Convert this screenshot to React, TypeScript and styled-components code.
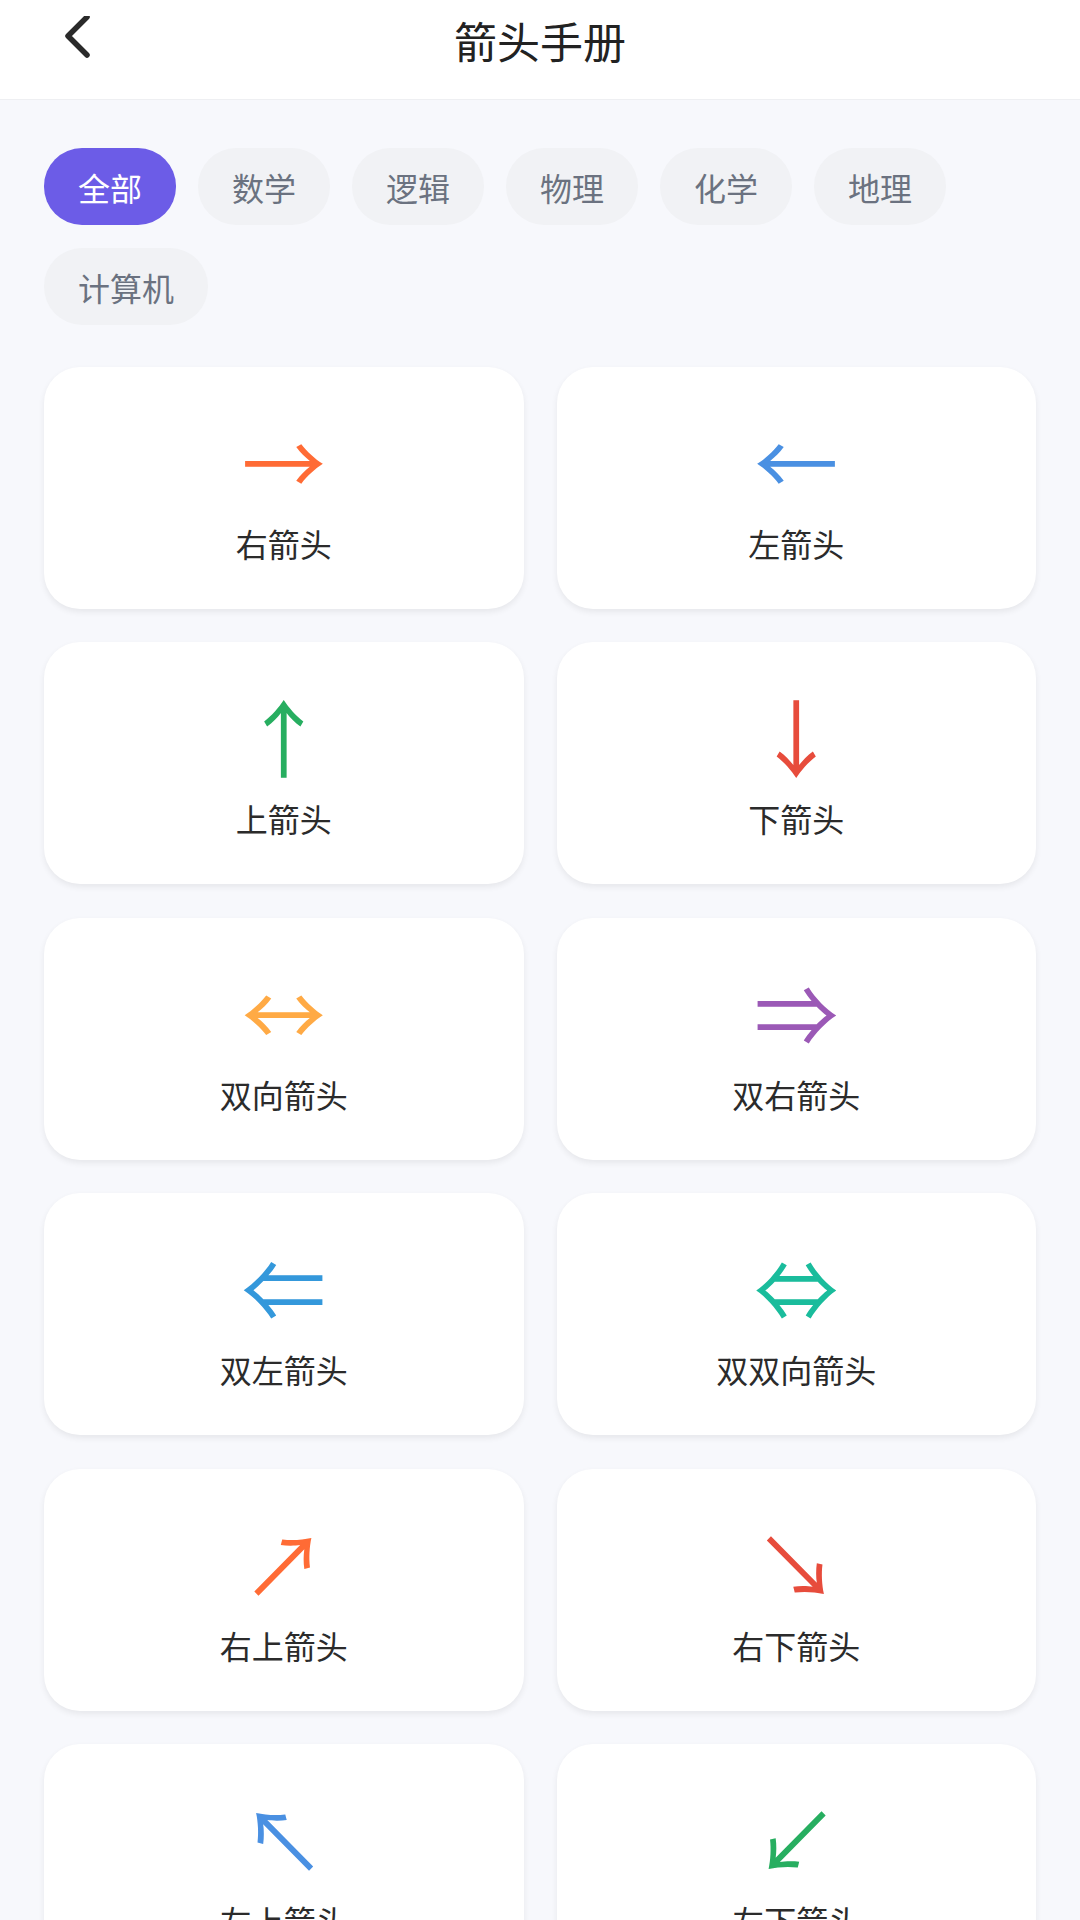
import React, { useState } from 'react';
import styled, { createGlobalStyle } from 'styled-components';

const GlobalStyle = createGlobalStyle`
  body {
    margin: 0;
    background: #f7f8fc;
    font-family: "Noto Sans CJK SC", "Noto Sans", sans-serif;
  }
`;

const Page = styled.div`
  min-height: 100vh;
  background: #f7f8fc;
`;

const Header = styled.header`
  height: 100px;
  box-sizing: border-box;
  padding: 0 55px 20px;
  background: #ffffff;
  border-bottom: 1px solid #eeeff2;
  display: grid;
  grid-template-columns: 1fr auto 1fr;
  align-items: center;
`;

const BackButton = styled.button`
  width: 48px;
  height: 48px;
  padding: 0;
  border: none;
  background: transparent;
  display: flex;
  justify-self: start;
  cursor: pointer;
`;

const Title = styled.h1`
  margin: 0;
  font-size: 43px;
  font-weight: 400;
  color: #222222;
  line-height: 60px;
`;

const ChipRow = styled.div`
  display: flex;
  flex-wrap: wrap;
  gap: 23px 22px;
  padding: 48px 44px 0;
`;

const Chip = styled.button<{ $active?: boolean }>`
  height: 77px;
  padding: 0 34px;
  border: none;
  border-radius: 38px;
  font-family: inherit;
  font-size: 32px;
  display: flex;
  align-items: center;
  background: ${(p) => (p.$active ? '#6c5ce7' : '#f1f2f5')};
  color: ${(p) => (p.$active ? '#ffffff' : '#6b7280')};
  cursor: pointer;
`;

const Grid = styled.div`
  display: grid;
  grid-template-columns: 1fr 1fr;
  column-gap: 33px;
  row-gap: 33.4px;
  padding: 42px 44px 40px;
`;

const Card = styled.div`
  height: 242px;
  box-sizing: border-box;
  background: #ffffff;
  border-radius: 36px;
  box-shadow: 0 3px 6px rgba(0, 0, 0, 0.07);
  display: flex;
  flex-direction: column;
  align-items: center;
  padding-top: 43px;
`;

const Glyph = styled.div<{ $color: string }>`
  height: 100px;
  line-height: 100px;
  font-size: 84px;
  color: ${(p) => p.$color};
  font-family: "Noto Sans CJK SC", "DejaVu Sans", sans-serif;
`;

const Label = styled.div`
  margin-top: 11px;
  line-height: 44px;
  font-size: 32px;
  color: #2b2b2b;
`;

const categories = ['全部', '数学', '逻辑', '物理', '化学', '地理', '计算机'];

const arrows = [
  { symbol: '→', name: '右箭头', color: '#ff6b35' },
  { symbol: '←', name: '左箭头', color: '#4a90e2' },
  { symbol: '↑', name: '上箭头', color: '#27ae60' },
  { symbol: '↓', name: '下箭头', color: '#e74c3c' },
  { symbol: '↔', name: '双向箭头', color: '#ffaa45' },
  { symbol: '⇒', name: '双右箭头', color: '#9b59b6' },
  { symbol: '⇐', name: '双左箭头', color: '#3498db' },
  { symbol: '⇔', name: '双双向箭头', color: '#1abc9c' },
  { symbol: '↗', name: '右上箭头', color: '#ff6b35' },
  { symbol: '↘', name: '右下箭头', color: '#e74c3c' },
  { symbol: '↖', name: '左上箭头', color: '#4a90e2' },
  { symbol: '↙', name: '左下箭头', color: '#27ae60' },
];

const App: React.FC = () => {
  const [active, setActive] = useState('全部');

  return (
    <Page>
      <GlobalStyle />
      <Header>
        <BackButton aria-label="返回">
          <svg width="48" height="48" viewBox="0 0 48 48" fill="none">
            <path
              d="M32 1 L13 20 L32 39"
              stroke="#2a2a2a"
              strokeWidth="5.5"
              strokeLinecap="round"
              strokeLinejoin="round"
            />
          </svg>
        </BackButton>
        <Title>箭头手册</Title>
        <span />
      </Header>

      <ChipRow>
        {categories.map((c) => (
          <Chip key={c} $active={c === active} onClick={() => setActive(c)}>
            {c}
          </Chip>
        ))}
      </ChipRow>

      <Grid>
        {arrows.map((a) => (
          <Card key={a.name}>
            <Glyph $color={a.color}>{a.symbol}</Glyph>
            <Label>{a.name}</Label>
          </Card>
        ))}
      </Grid>
    </Page>
  );
};

export default App;
